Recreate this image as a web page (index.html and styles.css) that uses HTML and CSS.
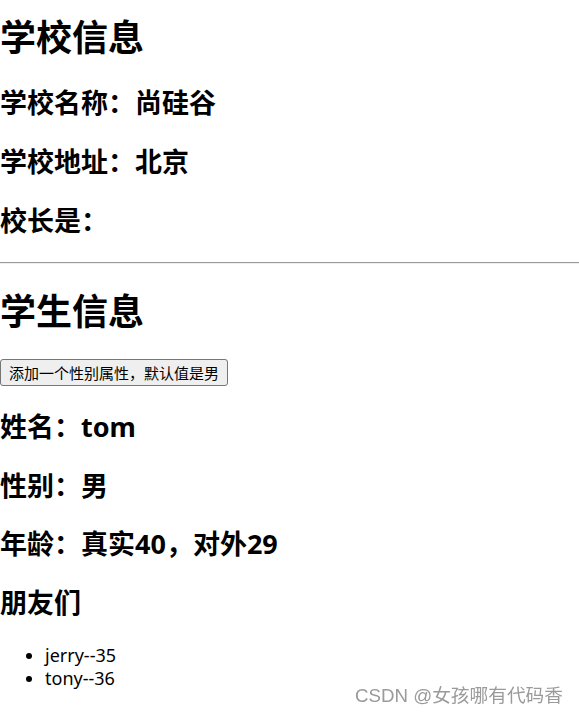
FILE: index.html
```html
<!DOCTYPE html>
<html lang="zh-CN">
<head>
    <meta charset="UTF-8">
    <title>Vue 示例</title>
    <link rel="stylesheet" href="styles.css">
</head>
<body>
    <div id="root">
        <div class="school">
            <h1>学校信息</h1>
            <h2>学校名称：尚硅谷</h2>
            <h2>学校地址：北京</h2>
            <h2>校长是：</h2>
        </div>
        <hr>
        <div class="student">
            <h1>学生信息</h1>
            <button class="add-btn">添加一个性别属性，默认值是男</button>
            <h2>姓名：tom</h2>
            <h2>性别：男</h2>
            <h2>年龄：真实40，对外29</h2>
            <h2>朋友们</h2>
            <ul class="friends">
                <li>jerry--35</li>
                <li>tony--36</li>
            </ul>
        </div>
    </div>

    <div class="watermark">CSDN @女孩哪有代码香</div>
</body>
</html>
```

FILE: styles.css
```css
body {
    margin: 0;
    font-family: "Noto Sans", "Noto Sans CJK SC", sans-serif;
    font-size: 18px;
    line-height: 23px;
    color: #000;
    background: #fff;
}

h1 {
    font-size: 36px;
    line-height: 47.5px;
    font-weight: bold;
    margin: 24.1px 0;
}

.school h1 {
    margin-top: 13.75px;
}

h2 {
    font-size: 27px;
    line-height: 36.4px;
    font-weight: bold;
    margin: 22.4px 0;
}

hr {
    margin: 9px 0;
    border: 0;
    border-top: 1px solid #9a9a9a;
    border-bottom: 1px solid #eeeeee;
}

.add-btn {
    display: block;
    width: fit-content;
    height: 27px;
    box-sizing: border-box;
    margin: 0;
    padding: 0 8px;
    font-family: "Noto Sans CJK SC", sans-serif;
    font-size: 15px;
    line-height: 25px;
    color: #000;
    background: #efefef;
    border: 1px solid #767676;
    border-radius: 3px;
}

.friends {
    margin: 18px 0;
    padding-left: 45px;
}

.watermark {
    position: fixed;
    right: 16px;
    bottom: 8px;
    font-family: "Liberation Sans", "Noto Sans CJK SC", sans-serif;
    font-size: 18.7px;
    line-height: 24px;
    color: #9a9a9a;
}
```
